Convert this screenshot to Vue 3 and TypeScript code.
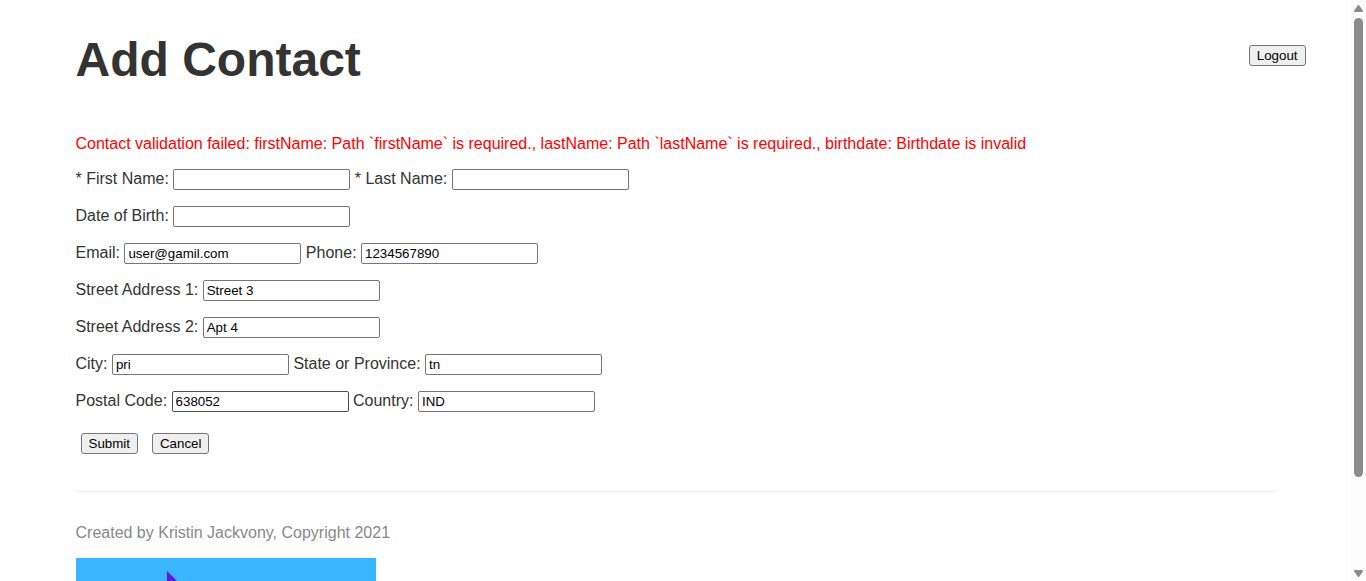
<script setup lang="ts">
import { reactive, ref } from 'vue'

interface Field {
  id: string
  label: string
  value: string
  active?: boolean
}

const error = ref(
  'Contact validation failed: firstName: Path `firstName` is required., lastName: Path `lastName` is required., birthdate: Birthdate is invalid',
)

const rows = reactive<Field[][]>([
  [
    { id: 'firstName', label: '* First Name:', value: '' },
    { id: 'lastName', label: '* Last Name:', value: '' },
  ],
  [{ id: 'birthdate', label: 'Date of Birth:', value: '' }],
  [
    { id: 'email', label: 'Email:', value: 'user@gamil.com' },
    { id: 'phone', label: 'Phone:', value: '1234567890' },
  ],
  [{ id: 'street1', label: 'Street Address 1:', value: 'Street 3' }],
  [{ id: 'street2', label: 'Street Address 2:', value: 'Apt 4' }],
  [
    { id: 'city', label: 'City:', value: 'pri' },
    { id: 'stateProvince', label: 'State or Province:', value: 'tn' },
  ],
  [
    { id: 'postalCode', label: 'Postal Code:', value: '638052', active: true },
    { id: 'country', label: 'Country:', value: 'IND' },
  ],
])
</script>

<template>
  <div class="page">
    <div class="content">
      <div class="container">
        <header class="header">
          <h1>Add Contact</h1>
          <button type="button" class="btn logout">Logout</button>
        </header>

        <p class="error" role="alert">{{ error }}</p>

        <form @submit.prevent>
          <div v-for="(row, i) in rows" :key="i" class="row">
            <template v-for="field in row" :key="field.id">
              <label :for="field.id">{{ field.label }}</label>
              {{ ' ' }}
              <input
                :id="field.id"
                v-model="field.value"
                type="text"
                spellcheck="false"
                :class="{ active: field.active }"
              />
              {{ ' ' }}
            </template>
          </div>
          <div class="actions">
            <button type="submit" class="btn">Submit</button>
            <button type="button" class="btn">Cancel</button>
          </div>
        </form>

        <footer class="footer">
          <p>Created by Kristin Jackvony, Copyright 2021</p>
          <svg class="logo" viewBox="0 0 300 300" aria-hidden="true">
            <rect width="300" height="300" fill="#38b6ff" />
            <path d="M91 13 L209 131 L91 249 Z" fill="#5e17eb" />
          </svg>
        </footer>
      </div>
    </div>

    <div class="scrollbar" aria-hidden="true">
      <svg class="arrow" viewBox="0 0 9 7">
        <path d="M4.5 1 L8 6 H1 Z" />
      </svg>
      <div class="track"><div class="thumb"></div></div>
      <svg class="arrow" viewBox="0 0 9 7">
        <path d="M4.5 6 L8 1 H1 Z" />
      </svg>
    </div>
  </div>
</template>

<style>
body {
  margin: 0;
  background: #fff;
}
</style>

<style scoped>
.page {
  display: flex;
  height: 100vh;
  overflow: hidden;
  color: #333;
  font-family: "Liberation Sans", Arial, sans-serif;
  font-size: 16px;
  line-height: 18px;
}

.content {
  flex: 1;
  min-width: 0;
  overflow: hidden;
}

.container {
  max-width: 1200px;
  margin: 0 auto;
}

.header {
  display: flex;
  align-items: flex-start;
  justify-content: space-between;
  margin-right: -30px;
  padding-top: 32px;
}

h1 {
  margin: 0;
  font-size: 48px;
  line-height: 56px;
}

.btn {
  box-sizing: border-box;
  height: 21px;
  padding: 0 7px;
  border: 1px solid #767676;
  border-radius: 3px;
  background: #efefef;
  color: #000;
  font-family: inherit;
}

.logout {
  margin-top: 13px;
}

.error {
  margin: 47px 0 16px;
  color: #f00;
}

.row {
  margin-bottom: 16px;
}

input {
  box-sizing: border-box;
  width: 177px;
  height: 21px;
  padding: 1px 3px;
  border: 1px solid #767676;
  border-radius: 2px;
  background: #fff;
  color: #000;
  font-family: inherit;
}

input.active {
  border-color: #4f4f4f;
}

.actions {
  display: flex;
  gap: 14px;
  margin: 21px 5px 37px;
}

.footer {
  padding-top: 32px;
  border-top: 1px solid #eee;
  color: #888;
}

.footer p {
  margin: 0 0 16px;
}

.logo {
  display: block;
  width: 300px;
}

.scrollbar {
  box-sizing: border-box;
  display: flex;
  flex-direction: column;
  align-items: center;
  gap: 6px;
  width: 15px;
  padding: 5px 0 4px;
  background: #fcfcfc;
}

.arrow {
  flex: none;
  width: 9px;
  height: 7px;
  fill: #8b8b8b;
  stroke: #8b8b8b;
  stroke-width: 2px;
  stroke-linejoin: round;
}

.track {
  flex: 1;
  width: 9px;
}

.thumb {
  height: 84%;
  border-radius: 5px;
  background: #8b8b8b;
}
</style>
